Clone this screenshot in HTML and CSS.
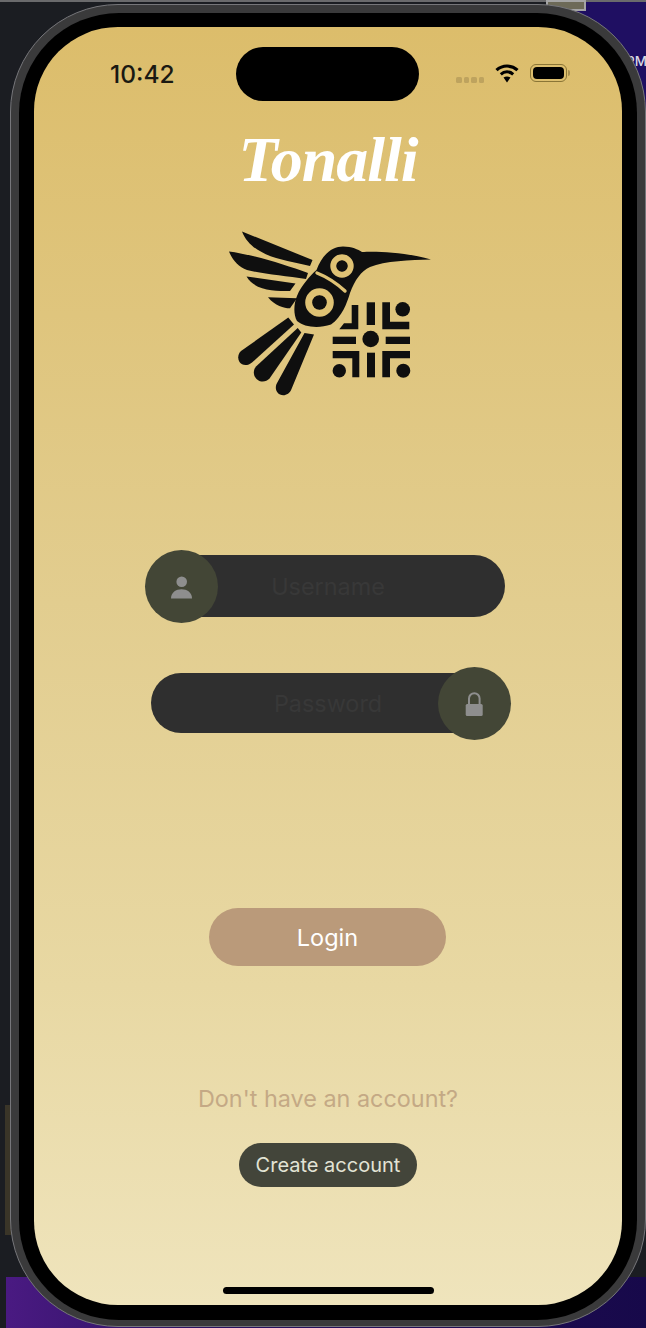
FILE: index.html
```html
<!DOCTYPE html>
<html lang="en">
<head>
<meta charset="utf-8">
<title>Tonalli</title>
<link rel="stylesheet" href="styles.css">
</head>
<body>
<div class="desktop" aria-hidden="true">
  <div class="wall wall-top"></div>
  <div class="wall wall-bottom"></div>
  <div class="thumb"></div>
  <div class="clock-bit">PM</div>
  <div class="dock-bit"></div>
</div>
<main class="device">
  <div class="bezel">
    <div class="screen">
      <header class="status">
        <div class="time">10:42</div>
        <div class="island"></div>
        <div class="indicators">
          <div class="dots"><i></i><i></i><i></i><i></i></div>
          <svg class="wifi" viewBox="0 0 24 20" width="24" height="20">
            <path d="M1.5 7.2C7.5 1.6 16.5 1.6 22.5 7.2" fill="none" stroke="#000" stroke-width="3.2"/>
            <path d="M5.8 11.3C9.4 8 14.6 8 18.2 11.3" fill="none" stroke="#000" stroke-width="3"/>
            <path d="M8.5 14.6C10.6 13 13.4 13 15.5 14.6L12 19.5Z" fill="#000"/>
          </svg>
          <div class="battery"><div class="battery-level"></div></div>
        </div>
      </header>

      <h1 class="brand">Tonalli</h1>

      <svg class="logo" viewBox="223 225 210 175" width="210" height="175" role="img" aria-label="Hummingbird logo">
        <g fill="#0f0f0f">
          <path d="M242 231.5L312.5 260L310 266C285 260 252 257 242 231.5Z"/>
          <path d="M229 251.5C255 255 285 265 308 273L306 279C285 276 262 274 247 270C238 267 232 259 229 251.5Z"/>
          <path d="M246.5 276.5L295.5 283.5L290 291C275 291 255 291 246.5 276.5Z"/>
          <path d="M268 297.3L297 298.300L290 308.300C285 308.500 275 306 268 297.3Z"/>
          <path d="M288.3 317.5L294 324.5L252 362.5C248 366 242 366 239.5 362C237 358 238.5 353 241 351Z"/>
          <path d="M297.7 328L301.3 332.5L269.500 378.500C266 382.500 260 382.500 256.500 379C253 375.500 253 370 256 366.500Z"/>
          <path d="M304.5 333L314 334.500L291.500 389C289.500 394.500 284 396.500 280 394.500C276 392.500 275 388 276.500 384Z"/>
          <path d="M316.5 270C323 253 333 246.500 343 246.500C352 246.500 358 249.500 362 252C375 251 405 252 431 259.500C410 260 385 261 370 267C361 271 355 280 350 293C347 303 342 317 331 324.500C318 329 304 327 297 321C293 314 294 303 297 296C299 290 303 285 307 280C310 276 313 273 316.500 270Z"/>
        </g>
        <g fill="none" stroke="#dfc274">
          <path d="M317 273Q332 279 345 291" stroke-width="3.4" stroke-linecap="round"/>
          <circle cx="342" cy="266" r="8.700" stroke-width="6"/>
          <circle cx="319.5" cy="302.5" r="10.800" stroke-width="7"/>
        </g>
        <g fill="#0f0f0f">
          <circle cx="342" cy="266" r="5.3"/>
          <circle cx="319.5" cy="302.5" r="6.8"/>
          <circle cx="370.7" cy="339" r="8.3"/>
          <circle cx="402.7" cy="309.3" r="7.3"/>
          <circle cx="339.3" cy="370.7" r="6.7"/>
          <circle cx="403.3" cy="370.7" r="7"/>
          <path d="M351.7 305H358.3V329.3H339.3L344 323.3H351.7Z"/>
          <rect x="366.7" y="302.3" width="8.3" height="22.7"/>
          <path d="M382.3 302.3H390V321.7H409.3V329.3H382.3Z"/>
          <rect x="332.7" y="336.7" width="23.3" height="7.3"/>
          <rect x="385.7" y="336.7" width="24.3" height="7.3"/>
          <path d="M332.7 351H359.3V377.3H352.3V358.3H332.7Z"/>
          <rect x="367" y="352.7" width="8" height="24.6"/>
          <path d="M382.3 351H410V358.3H390V377.3H382.3Z"/>
        </g>
      </svg>

      <section class="form">
        <div class="field">
          <span class="placeholder">Username</span>
          <div class="badge badge-left">
            <svg viewBox="0 0 73 73" width="73" height="73">
              <circle cx="36.7" cy="31.7" r="5.3" fill="#8e8e8e"/>
              <path d="M26 48.5C26 42.5 31 39.3 36.5 39.3S47 42.5 47 48.5Z" fill="#8e8e8e"/>
            </svg>
          </div>
        </div>
        <div class="field field-short">
          <span class="placeholder">Password</span>
          <div class="badge badge-right">
            <svg viewBox="0 0 73 73" width="73" height="73">
              <path d="M31 38V31.5A5.3 5.3 0 0 1 41.6 31.5V38" fill="none" stroke="#8e8e8e" stroke-width="2"/>
              <rect x="27.7" y="37" width="17" height="12" rx="1.5" fill="#8e8e8e"/>
            </svg>
          </div>
        </div>
      </section>

      <button class="login" type="button">Login</button>
      <p class="prompt">Don't have an account?</p>
      <button class="create" type="button">Create account</button>
      <div class="home-bar"></div>
    </div>
  </div>
</main>
</body>
</html>
```

FILE: styles.css
```css
* {
  box-sizing: border-box;
}

html,
body {
  margin: 0;
  height: 1328px;
  overflow: hidden;
  background: #1b1d22;
}

body {
  position: relative;
  font-family: Inter, "Noto Sans", sans-serif;
  padding: 4px 0 0 10px;
}

.desktop {
  position: absolute;
  inset: 0;
}

.wall {
  position: absolute;
}

.wall-top {
  top: 2px;
  right: 0;
  width: 90px;
  height: 110px;
  background: #1f0f62;
}

.wall-bottom {
  left: 6px;
  right: 0;
  top: 1277px;
  bottom: 0;
  background: linear-gradient(90deg, #4a1a82 0%, #2a1160 30%, #17094a 100%);
}

.desktop::before {
  content: "";
  position: absolute;
  left: 0;
  top: 0;
  right: 0;
  height: 2px;
  background: #6a6a6c;
}

.thumb {
  position: absolute;
  left: 546px;
  top: 0;
  width: 40px;
  height: 11px;
  background: #6d6a58;
  border: 2px solid #a5a5a5;
}

.clock-bit {
  position: absolute;
  left: 626px;
  top: 53px;
  font-size: 13.5px;
  font-weight: 500;
  color: #d9d9e4;
}

.dock-bit {
  position: absolute;
  left: 5px;
  top: 1105px;
  width: 6px;
  height: 130px;
  background: #3a3528;
}

.device {
  position: relative;
  width: 636px;
  height: 1323px;
  padding: 8px 8px 6px;
  border: 1px solid #76767a;
  border-radius: 108px;
  background: #3a3a3b;
}

.bezel {
  height: 100%;
  padding: 14px 15px 15px;
  border-radius: 100px;
  background: #000;
}

.screen {
  display: flex;
  flex-direction: column;
  align-items: center;
  height: 100%;
  padding-top: 20px;
  border-radius: 84px;
  background: linear-gradient(180deg, #dcbd6b 0%, #e2cd8f 45%, #e8d8a3 75%, #efe4bc 100%);
}

.screen > * {
  flex: none;
}

.status {
  display: grid;
  grid-template-columns: 202px 183px 203px;
  width: 100%;
  height: 54px;
}

.time {
  padding: 12px 0 0 76px;
  font-size: 24.5px;
  line-height: 30px;
  font-weight: 500;
  color: #1a1912;
}

.island {
  border-radius: 27px;
  background: #000;
}

.indicators {
  display: flex;
  align-items: flex-start;
  padding: 16px 0 0 37px;
}

.dots {
  display: flex;
  gap: 2px;
  margin: 14px 11px 0 0;
}

.dots i {
  display: block;
  width: 5.5px;
  height: 5.5px;
  border-radius: 1.5px;
  background: #bea35e;
}

.wifi {
  display: block;
}

.battery {
  position: relative;
  width: 37px;
  height: 18px;
  margin: 1px 0 0 11px;
  padding: 2px;
  border: 1px solid #8a7536;
  border-radius: 6px;
}

.battery::after {
  content: "";
  position: absolute;
  right: -4px;
  top: 5px;
  width: 2px;
  height: 6px;
  border-radius: 0 2px 2px 0;
  background: #a89050;
}

.battery-level {
  height: 100%;
  border-radius: 4px;
  background: #000;
}

.brand {
  margin: 24px 0 0;
  font-family: "Liberation Serif", serif;
  font-size: 64px;
  line-height: 70px;
  font-weight: 700;
  font-style: italic;
  letter-spacing: -1px;
  color: #fff;
}

.logo {
  display: block;
  margin-top: 30px;
}

.form {
  display: flex;
  flex-direction: column;
  gap: 56px;
  width: 354px;
  margin-top: 155px;
}

.field {
  position: relative;
  display: flex;
  align-items: center;
  justify-content: center;
  height: 62px;
  border-radius: 31px;
  background: #2f2f2f;
}

.field-short {
  height: 60px;
}

.placeholder {
  font-size: 23.4px;
  color: #383838;
}

.badge {
  position: absolute;
  top: 50%;
  width: 73px;
  height: 73px;
  margin-top: -36.5px;
  border-radius: 50%;
  background: #434636;
}

.badge svg {
  display: block;
}

.badge-left {
  left: -6px;
}

.badge-right {
  right: -6px;
}

button {
  border: 0;
  font-family: inherit;
}

.login {
  width: 237px;
  height: 58px;
  margin: 175px 1px 0 0;
  border-radius: 29px;
  background: #ba9a7a;
  font-size: 23.5px;
  color: #fff;
}

.prompt {
  margin: 119px 0 0;
  font-size: 23.4px;
  line-height: 28px;
  color: #c4a985;
}

.create {
  width: 178px;
  height: 44px;
  margin-top: 30px;
  border-radius: 22px;
  background: #43453a;
  font-size: 20px;
  color: #e2e3d5;
}

.home-bar {
  width: 211px;
  height: 7px;
  margin-top: 100px;
  border-radius: 4px;
  background: #000;
}
```
